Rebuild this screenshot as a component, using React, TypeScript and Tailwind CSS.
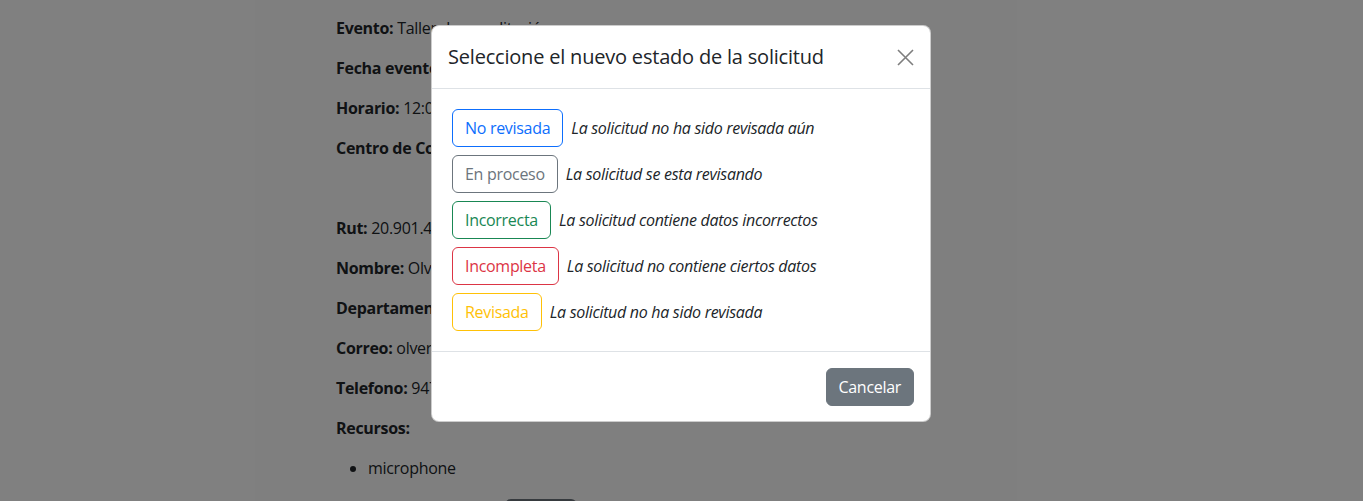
import React from "react";

const estados = [
  { label: "No revisada", desc: "La solicitud no ha sido revisada aún", cls: "border-[#0d6efd] text-[#0d6efd]" },
  { label: "En proceso", desc: "La solicitud se esta revisando", cls: "border-[#6c757d] text-[#6c757d]" },
  { label: "Incorrecta", desc: "La solicitud contiene datos incorrectos", cls: "border-[#198754] text-[#198754]" },
  { label: "Incompleta", desc: "La solicitud no contiene ciertos datos", cls: "border-[#dc3545] text-[#dc3545]" },
  { label: "Revisada", desc: "La solicitud no ha sido revisada", cls: "border-[#ffc107] text-[#ffc107]" },
];

function Field({ label, value }: { label: string; value?: string }) {
  return (
    <p className="mb-4 leading-6">
      <b className="font-bold">{label}</b> {value}
    </p>
  );
}

export default function App() {
  return (
    <div className="relative h-[501px] overflow-hidden bg-white font-['Segoe_UI','Open_Sans',sans-serif] text-[16px] tracking-[-0.3px] text-[#212529]">
      {/* page behind */}
      <div className="ml-[336px] pt-4">
        <Field label="Evento:" value="Taller de acreditación" />
        <Field label="Fecha evento:" value="12/05/2023" />
        <Field label="Horario:" value="12:00 - 14:00" />
        <Field label="Centro de Costo:" value="Informática" />
        <div className="h-10" />
        <Field label="Rut:" value="20.901.445-2" />
        <Field label="Nombre:" value="Olvera Ramírez" />
        <Field label="Departamento:" value="Informática" />
        <Field label="Correo:" value="olvera@correo.cl" />
        <Field label="Telefono:" value="947123456" />
        <Field label="Recursos:" />
        <ul className="list-disc pl-8 leading-6">
          <li>microphone</li>
        </ul>
        <div className="ml-[169px] mt-[19px] h-10 w-[72px] rounded-md bg-[#6c757d]" />
      </div>

      {/* backdrop */}
      <div className="absolute inset-0 bg-black/50" />

      {/* modal */}
      <div className="absolute left-[431px] top-[25px] w-[500px] rounded-lg border border-black/20 bg-white">
        <div className="flex items-center justify-between border-b border-[#dee2e6] p-4">
          <h5 className="text-[20px] font-medium leading-[30px] tracking-[-0.2px]">
            Seleccione el nuevo estado de la solicitud
          </h5>
          <button type="button" className="opacity-50">
            <svg width="17" height="17" viewBox="0 0 17 17" fill="none" stroke="#000" strokeWidth="1.6">
              <path d="M1 1L16 16M16 1L1 16" />
            </svg>
          </button>
        </div>

        <div className="p-4">
          {estados.map((e) => (
            <div key={e.label} className="flex items-center">
              <button
                type="button"
                className={["m-1 rounded-md border bg-transparent px-3 py-1.5 leading-6", e.cls].join(" ")}
              >
                {e.label}
              </button>
              <i className="ml-1 leading-6">{e.desc}</i>
            </div>
          ))}
        </div>

        <div className="flex justify-end border-t border-[#dee2e6] px-3 pb-[11px] pt-3">
          <button
            type="button"
            className="m-1 rounded-md border border-[#6c757d] bg-[#6c757d] px-3 py-1.5 leading-6 text-white"
          >
            Cancelar
          </button>
        </div>
      </div>
    </div>
  );
}
